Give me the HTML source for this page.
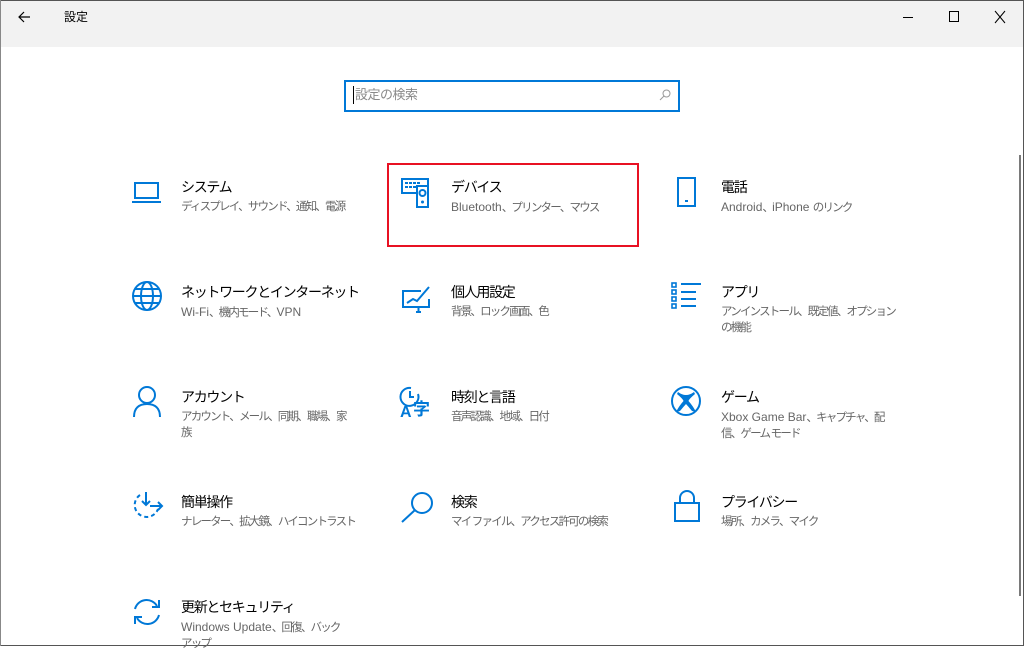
<!DOCTYPE html>
<html><head><meta charset="utf-8"><style>
*{margin:0;padding:0;box-sizing:border-box}
body{width:1024px;height:646px;overflow:hidden;background:#fff;position:relative;font-family:"Liberation Sans","Noto Sans CJK JP",sans-serif;}
.tb{position:absolute;left:0;top:0;width:1024px;height:47px;background:#f2f2f2}
.t{position:absolute;font-size:14px;letter-spacing:-1.3px;color:#000;line-height:18px;white-space:nowrap}
.s{position:absolute;font-size:11.5px;letter-spacing:-1.8px;color:#666;line-height:16px;white-space:nowrap}
.s i{font-style:normal;letter-spacing:0;font-size:12px}
svg{position:absolute;overflow:visible}
.ic{fill:none;stroke:#0078d7;stroke-width:2}
</style></head><body>
<div class="tb"></div>
<svg style="left:16px;top:9px" width="16" height="16"><path d="M14 8H3M8 3L3 8L8 13" fill="none" stroke="#000" stroke-width="1.2"/></svg>
<div class="t" style="left:64px;top:8px;font-size:12px;letter-spacing:0">設定</div>
<div style="position:absolute;left:903px;top:17px;width:10px;height:1px;background:#000"></div>
<div style="position:absolute;left:949px;top:11px;width:10px;height:11px;border:1px solid #000"></div>
<svg style="left:994px;top:11px" width="12" height="12"><path d="M1 0L11 12M11 0L1 12" stroke="#000" stroke-width="1"/></svg>
<div style="position:absolute;left:0;top:0;width:1024px;height:1px;background:#555"></div>
<div style="position:absolute;left:1023px;top:0;width:1px;height:646px;background:#555"></div>
<div style="position:absolute;left:0;top:645px;width:1024px;height:1px;background:#555"></div>
<div style="position:absolute;left:0;top:0;width:1px;height:646px;background:#888"></div>
<div style="position:absolute;left:1019px;top:155px;width:2px;height:441px;background:#7a7a7a"></div>

<div style="position:absolute;left:344px;top:80px;width:336px;height:32px;border:2px solid #0078d7"></div>
<div style="position:absolute;left:353px;top:86px;width:1px;height:18px;background:#000"></div>
<div class="t" style="left:355px;top:86px;color:#8a8a8a;font-size:13px;letter-spacing:-0.5px">設定の検索</div>
<svg style="left:659px;top:89px" width="12" height="12"><circle cx="7.5" cy="4.5" r="3.5" fill="none" stroke="#999"/><path d="M5 7L1 11" stroke="#999"/></svg>

<div style="position:absolute;left:387px;top:163px;width:252px;height:84px;border:2px solid #e81123"></div>

<svg style="left:132px;top:182px" width="30" height="22"><rect class="ic" x="3" y="1" width="23" height="15"/><path class="ic" d="M0 20H29"/></svg>
<div class="t" style="left:181px;top:178px">システム</div>
<div class="s" style="left:181px;top:199px">ディスプレイ、サウンド、通知、電源</div>

<svg style="left:401px;top:178px" width="32" height="30"><rect x="1" y="1" width="26" height="14" fill="none" stroke="#0078d7" stroke-width="2"/><g fill="#0078d7"><rect x="4" y="4" width="3" height="2"/><rect x="8" y="4" width="3" height="2"/><rect x="12" y="4" width="3" height="2"/><rect x="16" y="4" width="3" height="2"/><rect x="4" y="8" width="3" height="2"/><rect x="8" y="8" width="3" height="2"/><rect x="12" y="8" width="3" height="2"/></g><rect x="16" y="8" width="11" height="21" fill="#fff" stroke="#0078d7" stroke-width="2"/><circle class="ic" cx="21.5" cy="15" r="3"/><circle cx="21.5" cy="24" r="1.5" fill="#0078d7"/></svg>
<div class="t" style="left:451px;top:178px">デバイス</div>
<div class="s" style="left:451px;top:199px"><i>Bluetooth</i>、プリンター、マウス</div>

<svg style="left:677px;top:177px" width="20" height="30"><rect class="ic" x="1" y="1" width="17" height="28"/><path d="M8 24H11" stroke="#0078d7" stroke-width="2"/></svg>
<div class="t" style="left:721px;top:178px">電話</div>
<div class="s" style="left:721px;top:199px"><i>Android</i>、<i>iPhone </i>のリンク</div>

<svg style="left:132px;top:281px" width="30" height="30"><circle class="ic" cx="15" cy="15" r="14"/><ellipse class="ic" cx="15" cy="15" rx="6" ry="14"/><path class="ic" d="M1 15H29M3 8H27M3 22H27"/></svg>
<div class="t" style="left:181px;top:283px">ネットワークとインターネット</div>
<div class="s" style="left:181px;top:304px"><i>Wi-Fi</i>、機内モード、<i>VPN</i></div>

<svg style="left:401px;top:285px" width="32" height="28"><path class="ic" d="M20 6H2V22H28V14"/><path class="ic" d="M15 27H20M17.5 22V27"/><path class="ic" d="M6 18L12 14L16 16L28 2"/></svg>
<div class="t" style="left:451px;top:283px">個人用設定</div>
<div class="s" style="left:451px;top:304px">背景、ロック画面、色</div>

<svg style="left:671px;top:282px" width="32" height="28"><g fill="none" stroke="#0078d7" stroke-width="1.6"><rect x="1" y="1" width="4" height="4"/><rect x="1" y="8" width="4" height="4"/><rect x="1" y="15" width="4" height="4"/><rect x="1" y="22" width="4" height="4"/></g><path class="ic" d="M10 2H30M10 10H25M10 17H25M10 24H25"/></svg>
<div class="t" style="left:721px;top:283px">アプリ</div>
<div class="s" style="left:721px;top:304px">アンインストール、既定値、オプション<br>の機能</div>

<svg style="left:133px;top:386px" width="28" height="32"><circle class="ic" cx="14" cy="9" r="8"/><path class="ic" d="M1 31C1 22 6 18 14 18C22 18 27 22 27 31"/></svg>
<div class="t" style="left:181px;top:388px">アカウント</div>
<div class="s" style="left:181px;top:409px">アカウント、メール、同期、職場、家<br>族</div>

<svg style="left:400px;top:386px" width="34" height="32"><path class="ic" d="M11 2A9 9 0 1 0 18 8"/><path class="ic" d="M10 5V11H14"/><text x="0" y="31" font-family="Liberation Sans" font-weight="bold" font-size="16" fill="#0078d7">A</text><text x="13" y="29" font-family="Noto Sans CJK JP" font-weight="bold" font-size="17" fill="#0078d7">字</text></svg>
<div class="t" style="left:451px;top:388px">時刻と言語</div>
<div class="s" style="left:451px;top:409px">音声認識、地域、日付</div>

<svg style="left:671px;top:386px" width="32" height="32"><circle class="ic" cx="15" cy="15" r="14"/><path d="M7 6Q15 12 23 6L24 8Q18 13 17.5 15Q22 20 25 26L21 25Q16 19 15 18Q14 19 9 25L5 26Q8 20 12.5 15Q12 13 6 8Z" fill="#0078d7"/></svg>
<div class="t" style="left:721px;top:388px">ゲーム</div>
<div class="s" style="left:721px;top:409px"><i>Xbox Game Bar</i>、キャプチャ、配<br>信、ゲーム モード</div>

<svg style="left:132px;top:491px" width="32" height="30"><path class="ic" d="M8 4A12 12 0 1 0 26 18" stroke-dasharray="4 3"/><path class="ic" d="M14 1V14M10 10L14 14L18 10"/><path class="ic" d="M18 15H30M26 11L30 15L26 19"/></svg>
<div class="t" style="left:181px;top:493px">簡単操作</div>
<div class="s" style="left:181px;top:514px">ナレーター、拡大鏡、ハイコントラスト</div>

<svg style="left:400px;top:491px" width="34" height="32"><circle class="ic" cx="22" cy="12" r="10"/><path class="ic" d="M15 19L2 31"/></svg>
<div class="t" style="left:451px;top:493px">検索</div>
<div class="s" style="left:451px;top:514px">マイ ファイル、アクセス許可の検索</div>

<svg style="left:674px;top:490px" width="26" height="32"><path class="ic" d="M6 13V8A7 7 0 0 1 20 8V13"/><rect class="ic" x="1" y="13" width="24" height="18"/></svg>
<div class="t" style="left:721px;top:493px">プライバシー</div>
<div class="s" style="left:721px;top:514px">場所、カメラ、マイク</div>

<svg style="left:131px;top:596px" width="32" height="32"><path class="ic" d="M4 13A12 12 0 0 1 26 10"/><path class="ic" d="M28 4V11H21"/><path class="ic" d="M28 19A12 12 0 0 1 6 22"/><path class="ic" d="M4 28V21H11"/></svg>
<div class="t" style="left:181px;top:598px">更新とセキュリティ</div>
<div class="s" style="left:181px;top:619px"><i>Windows Update</i>、回復、バック<br>アップ</div>
</body></html>
